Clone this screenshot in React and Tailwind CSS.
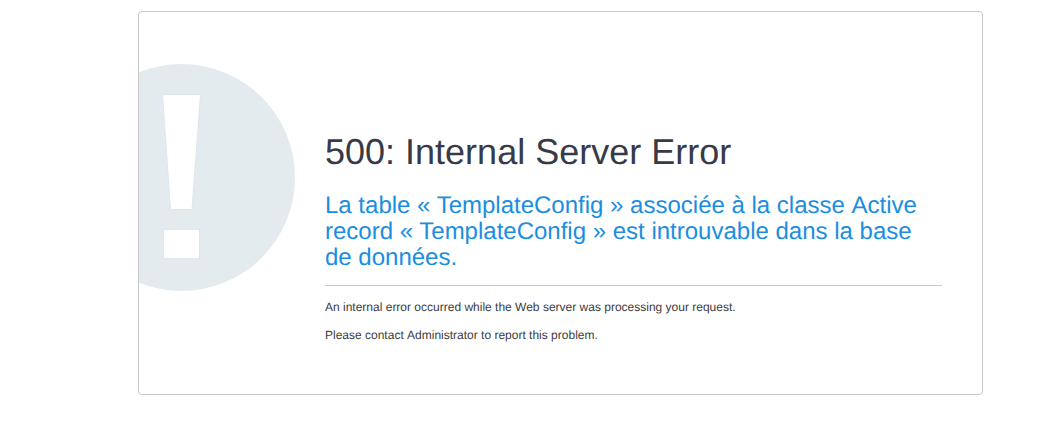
export default function App() {
  return (
    <div className="min-h-screen bg-white pt-[11px] font-['Liberation_Sans',Arial,sans-serif] [text-rendering:geometricPrecision]">
      <div className="ml-[138px] flex h-[384px] w-[845px] items-start overflow-hidden rounded-[4px] border border-[#c8c8c8] bg-white">
        {/* big exclamation mark, circle is cut off by the card */}
        <svg className="mt-[52px] shrink-0" width="156" height="228" viewBox="0 0 156 228">
          <circle cx="42.5" cy="113.5" r="113.5" fill="#e4ebef" />
          <path d="M23.5 30.5H61.5L53 145.5H31.5Z" fill="#fff" stroke="#dde7f0" strokeWidth="1" />
          <rect x="24.5" y="165.5" width="36" height="29" fill="#fff" stroke="#dde7f0" strokeWidth="1" />
        </svg>
        <div className="ml-[30px] mt-[120px] w-[617px] shrink-0">
          <h1 className="text-[36px] leading-[39.6px] font-normal text-[#373a47]">500: Internal Server Error</h1>
          <h2 className="mt-[21px] text-[24px] leading-[26.4px] font-normal text-[#1b8ee0]">
            La table « TemplateConfig » associée à la classe<span className="[font-kerning:none]"> </span>Active record « TemplateConfig » est introuvable dans la base de données.
          </h2>
          <hr className="mt-[13px] border-t border-[#c8c8c8]" />
          <p className="mt-[14px] text-[12px] leading-[15px] text-[#3c3c3c]">An internal error occurred while the Web server was processing your request.</p>
          <p className="mt-[13px] text-[12px] leading-[15px] text-[#3c3c3c]">Please contact<span className="[font-kerning:none]"> </span>Administrator to report this problem.</p>
        </div>
      </div>
    </div>
  );
}
